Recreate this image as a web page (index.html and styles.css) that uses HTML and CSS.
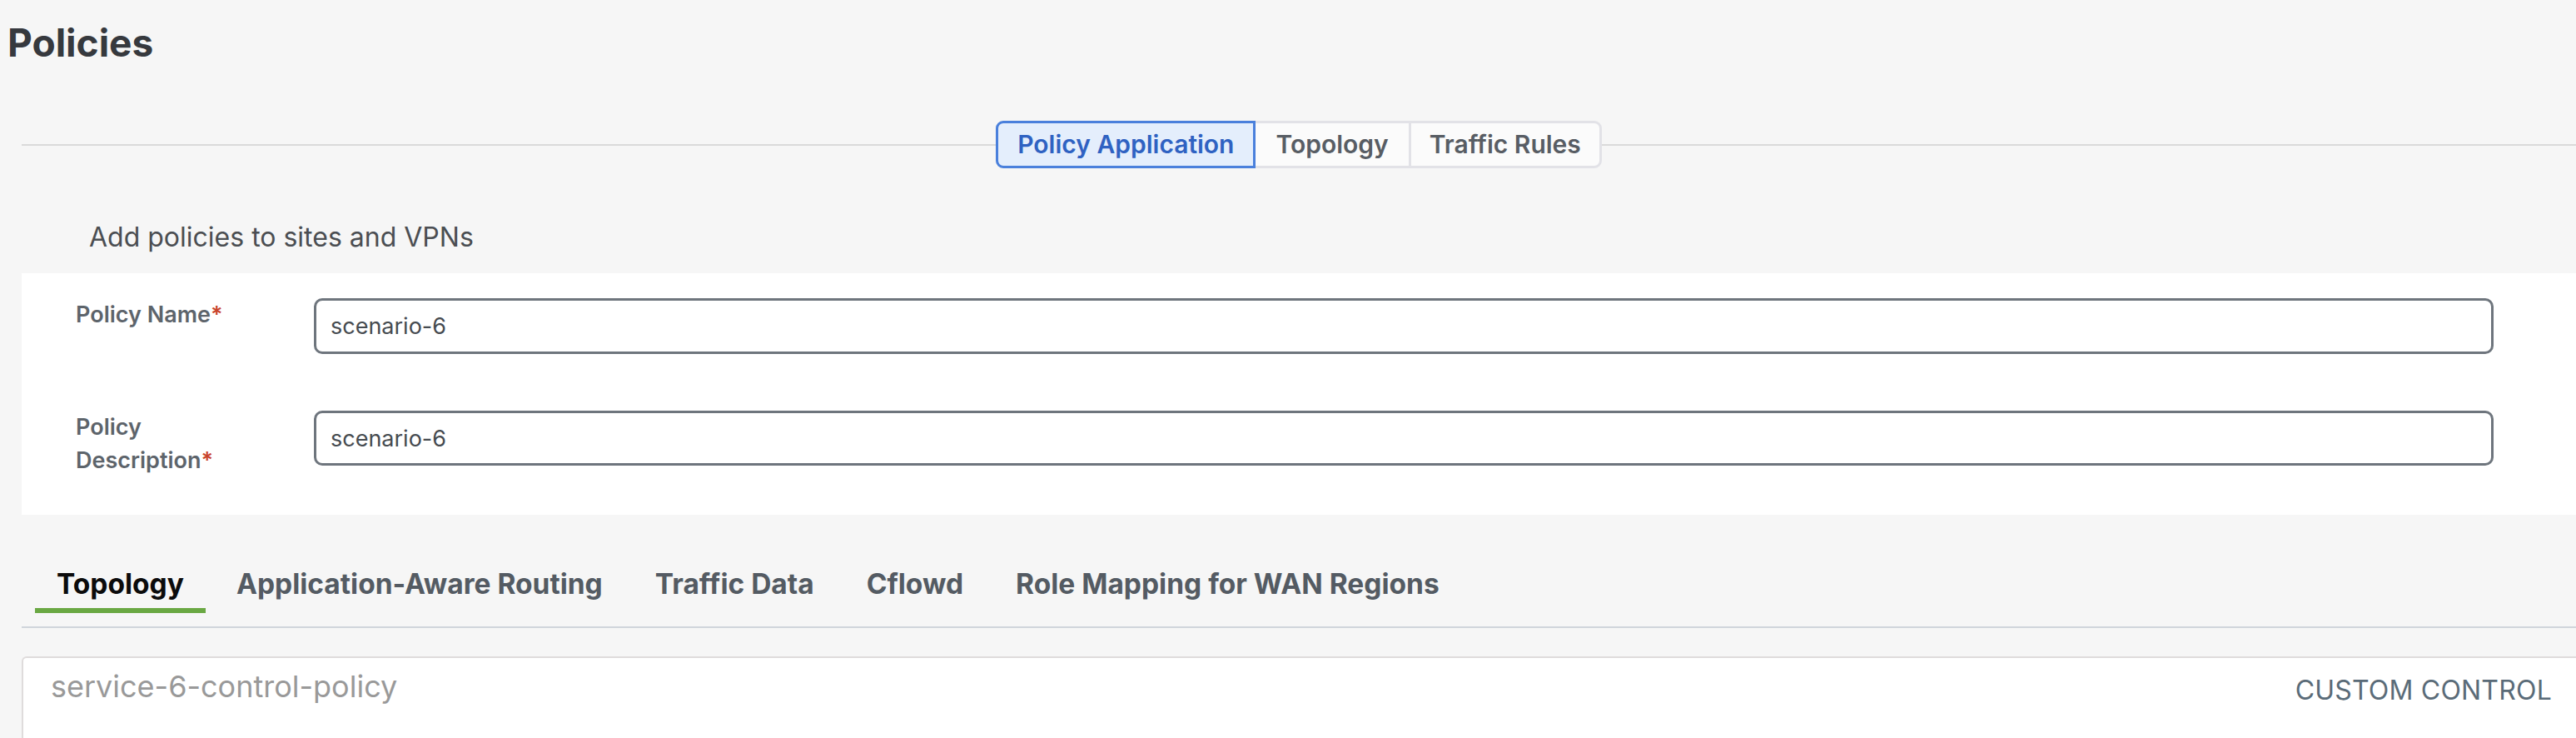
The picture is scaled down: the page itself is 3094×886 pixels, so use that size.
FILE: index.html
```html
<!DOCTYPE html>
<html lang="en">
<head>
<meta charset="utf-8">
<title>Policies</title>
<link rel="stylesheet" href="styles.css">
</head>
<body>
<h1 class="page-title">Policies</h1>

<div class="seg-row">
  <div class="seg-line"></div>
  <div class="seg">
    <div class="seg-item active">Policy Application</div>
    <div class="seg-item">Topology</div>
    <div class="seg-item last">Traffic Rules</div>
  </div>
  <div class="seg-line"></div>
</div>

<p class="intro">Add policies to sites and VPNs</p>

<section class="form-card">
  <div class="form-row">
    <label class="form-label">Policy Name<span class="req">*</span></label>
    <input class="form-input" type="text" value="scenario-6">
  </div>
  <div class="form-row">
    <label class="form-label">Policy<br>Description<span class="req">*</span></label>
    <input class="form-input short" type="text" value="scenario-6">
  </div>
</section>

<nav class="tabs">
  <div class="tab active">Topology</div>
  <div class="tab">Application-Aware Routing</div>
  <div class="tab">Traffic Data</div>
  <div class="tab">Cflowd</div>
  <div class="tab">Role Mapping for WAN Regions</div>
</nav>

<section class="policy-card">
  <div class="policy-name">service-6-control-policy</div>
  <div class="policy-type">CUSTOM CONTROL</div>
</section>
</body>
</html>
```
FILE: styles.css
```css
html, body {
  margin: 0;
  padding: 0;
}
body {
  background: #f6f6f6;
  font-family: Inter, "Noto Sans", sans-serif;
  overflow: hidden;
}

.page-title {
  margin: 28px 0 0 0;
  padding-left: 9px;
  font-size: 46px;
  line-height: 1;
  font-weight: 700;
  color: #36393e;
}

.seg-row {
  display: flex;
  align-items: center;
  margin: 71px 0 0 26px;
}
.seg-line {
  flex: 1;
  height: 2px;
  background: #dadada;
}
.seg {
  display: flex;
  border: 3px solid #e2e2e7;
  border-radius: 9px;
  background: #fbfbfb;
  height: 51px;
}
.seg-item {
  font-size: 30px;
  font-weight: 600;
  line-height: 51px;
  color: #585d64;
  padding: 0 24px;
  white-space: nowrap;
}
.seg-item.active {
  margin: -3px 0 -3px -3px;
  padding: 0 23px;
  border: 3px solid #4a80dc;
  border-radius: 9px 0 0 9px;
  background: #e4eefc;
  color: #2f62c2;
}
.seg-item.last {
  border-left: 3px solid #e2e2e7;
  padding: 0 22px;
}

.intro {
  margin: 67px 0 0 107px;
  font-size: 32px;
  line-height: 1;
  color: #4b4e52;
}

.form-card {
  margin: 27px 0 0 26px;
  background: #ffffff;
  padding: 30px 99px 45px 65px;
  display: flex;
  flex-direction: column;
  gap: 68px;
}
.form-row {
  display: flex;
  align-items: flex-start;
}
.form-label {
  width: 286px;
  flex: none;
  font-size: 27px;
  font-weight: 600;
  line-height: 40px;
  color: #5d646b;
}
.req {
  color: #c9432b;
}
.form-input {
  flex: 1;
  box-sizing: border-box;
  height: 67px;
  border: 3px solid #6e757d;
  border-radius: 10px;
  background: #ffffff;
  padding: 0 17px;
  font-family: Inter, "Noto Sans", sans-serif;
  font-size: 27px;
  color: #464b50;
  outline: none;
}
.form-input.short {
  height: 66px;
}

.tabs {
  display: flex;
  gap: 11px;
  margin: 67px 0 0 26px;
  padding: 0 0 16px 16px;
  border-bottom: 2px solid #d0d5db;
}
.tab {
  padding: 0 26px 11px;
  font-size: 33.5px;
  font-weight: 700;
  line-height: 1;
  color: #545b63;
  border-bottom: 6px solid transparent;
  white-space: nowrap;
}
.tab.active {
  color: #0b0b0b;
  border-bottom-color: #6aa843;
}

.policy-card {
  margin: 34px 0 0 26px;
  background: #ffffff;
  border-top: 2px solid #dfdcdc;
  border-left: 2px solid #dfdcdc;
  border-top-left-radius: 6px;
  min-height: 92px;
  display: flex;
  justify-content: space-between;
  align-items: flex-start;
  padding: 16px 29px 0 33px;
}
.policy-name {
  font-size: 36px;
  line-height: 1;
  color: #999999;
}
.policy-type {
  margin-top: 7px;
  font-size: 32px;
  line-height: 1;
  color: #5a6b78;
  letter-spacing: 0.2px;
}
```
